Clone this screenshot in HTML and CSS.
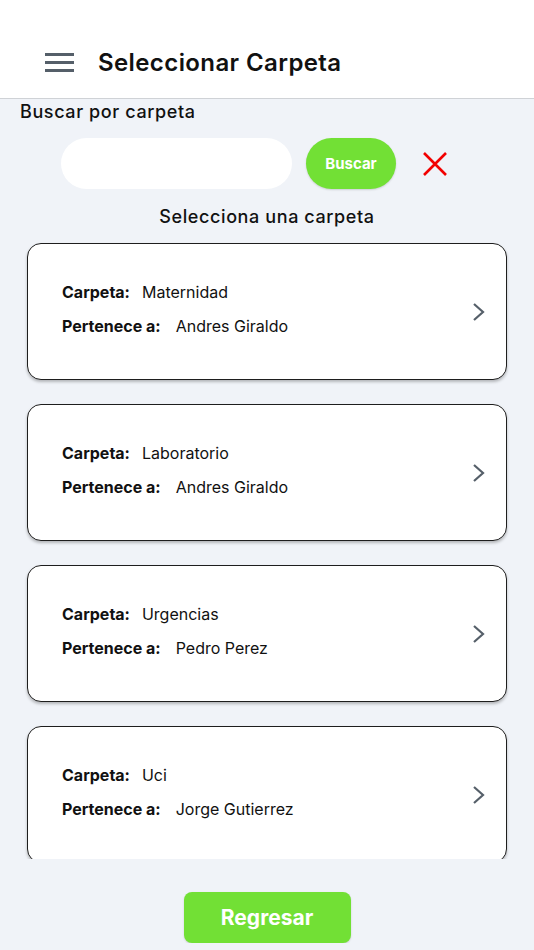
FILE: index.html
```html
<!DOCTYPE html>
<html lang="es">
<head>
    <meta charset="UTF-8">
    <meta name="viewport" content="width=device-width, initial-scale=1.0">
    <title>Seleccionar Carpeta</title>
    <link rel="stylesheet" href="styles.css">
</head>
<body>
<header>
    <div class="menu-icon">
        <span class="bar"></span>
        <span class="bar"></span>
        <span class="bar"></span>
    </div>
    <div class="title">Seleccionar Carpeta</div>
</header>

<main>
    <div class="search-label">Buscar por carpeta</div>
    <div class="search-row">
        <input type="text" class="search-input">
        <button class="search-button">Buscar</button>
        <svg class="clear-icon" width="24" height="24" viewBox="0 0 24 24">
            <path d="M1 1 L23 23 M23 1 L1 23" stroke="#f20000" stroke-width="2.6" fill="none"/>
        </svg>
    </div>
    <div class="list-title">Selecciona una carpeta</div>

    <div class="folder-list">
        <div class="folder-card">
            <div class="folder-info">
                <div class="row"><span class="label">Carpeta:</span><span>Maternidad</span></div>
                <div class="row"><span class="label owner">Pertenece a:</span><span>Andres Giraldo</span></div>
            </div>
            <svg class="chevron" width="14" height="20" viewBox="0 0 14 20"><path d="M2 2 L11 10 L2 18" stroke="#555f69" stroke-width="2.2" fill="none"/></svg>
        </div>
        <div class="folder-card">
            <div class="folder-info">
                <div class="row"><span class="label">Carpeta:</span><span>Laboratorio</span></div>
                <div class="row"><span class="label owner">Pertenece a:</span><span>Andres Giraldo</span></div>
            </div>
            <svg class="chevron" width="14" height="20" viewBox="0 0 14 20"><path d="M2 2 L11 10 L2 18" stroke="#555f69" stroke-width="2.2" fill="none"/></svg>
        </div>
        <div class="folder-card">
            <div class="folder-info">
                <div class="row"><span class="label">Carpeta:</span><span>Urgencias</span></div>
                <div class="row"><span class="label owner">Pertenece a:</span><span>Pedro Perez</span></div>
            </div>
            <svg class="chevron" width="14" height="20" viewBox="0 0 14 20"><path d="M2 2 L11 10 L2 18" stroke="#555f69" stroke-width="2.2" fill="none"/></svg>
        </div>
        <div class="folder-card">
            <div class="folder-info">
                <div class="row"><span class="label">Carpeta:</span><span>Uci</span></div>
                <div class="row"><span class="label owner">Pertenece a:</span><span>Jorge Gutierrez</span></div>
            </div>
            <svg class="chevron" width="14" height="20" viewBox="0 0 14 20"><path d="M2 2 L11 10 L2 18" stroke="#555f69" stroke-width="2.2" fill="none"/></svg>
        </div>
    </div>

    <div class="footer">
        <button class="back-button">Regresar</button>
    </div>
</main>
</body>
</html>
```

FILE: styles.css
```css
html, body {
    margin: 0;
    padding: 0;
    font-family: Inter, "Noto Sans", sans-serif;
    color: #111;
    background-color: #f0f3f8;
}

header {
    height: 72px;
    padding-top: 26px;
    background-color: #fff;
    border-bottom: 1px solid #cfd2d6;
    display: flex;
    align-items: center;
    box-sizing: content-box;
}

.menu-icon {
    width: 29px;
    margin-left: 45px;
    display: flex;
    flex-direction: column;
    gap: 5px;
}

.menu-icon .bar {
    height: 3px;
    background-color: #555f69;
}

.title {
    margin-left: 24px;
    font-size: 24px;
    font-weight: 600;
    letter-spacing: 0.4px;
}

.search-label {
    padding: 1px 0 0 20px;
    font-size: 18px;
    font-weight: 500;
    line-height: 24px;
    letter-spacing: 0.6px;
}

.search-row {
    display: flex;
    align-items: center;
    margin-top: 14px;
    padding-left: 61px;
}

.search-input {
    width: 231px;
    height: 51px;
    box-sizing: border-box;
    border: none;
    border-radius: 26px;
    background-color: #fff;
    outline: none;
}

.search-button {
    width: 90px;
    height: 51px;
    margin-left: 14px;
    border: none;
    border-radius: 26px;
    background-color: #72e035;
    color: #fff;
    font-family: inherit;
    font-size: 15px;
    font-weight: 700;
    box-shadow: 0 1px 2px rgba(0, 0, 0, 0.15);
}

.clear-icon {
    margin-left: 27px;
}

.list-title {
    margin-top: 16px;
    text-align: center;
    font-size: 18px;
    font-weight: 500;
    line-height: 24px;
    letter-spacing: 0.6px;
}

.folder-list {
    height: 616px;
    margin-top: 12px;
    padding: 2px 27px 0;
    overflow: hidden;
    display: flex;
    flex-direction: column;
    gap: 24px;
}

.folder-card {
    flex-shrink: 0;
    height: 137px;
    box-sizing: border-box;
    display: flex;
    align-items: center;
    justify-content: space-between;
    padding: 0 20px 5px 34px;
    background-color: #fff;
    border: 1.5px solid #1e1e1e;
    border-radius: 14px;
    box-shadow: 0 2px 3px rgba(0, 0, 0, 0.25);
}

.folder-info {
    display: flex;
    flex-direction: column;
    gap: 10px;
    font-size: 16px;
    line-height: 24px;
}

.folder-info .label {
    font-weight: 700;
    margin-right: 12px;
}

.folder-info .owner {
    margin-right: 15px;
}

.chevron {
    margin-top: 5px;
}

.footer {
    display: flex;
    justify-content: center;
    padding-top: 33px;
}

.back-button {
    width: 167px;
    height: 51px;
    border: none;
    border-radius: 8px;
    background-color: #72e035;
    color: #fff;
    font-family: inherit;
    font-size: 21px;
    font-weight: 700;
    box-shadow: 0 1px 2px rgba(0, 0, 0, 0.15);
}
```
